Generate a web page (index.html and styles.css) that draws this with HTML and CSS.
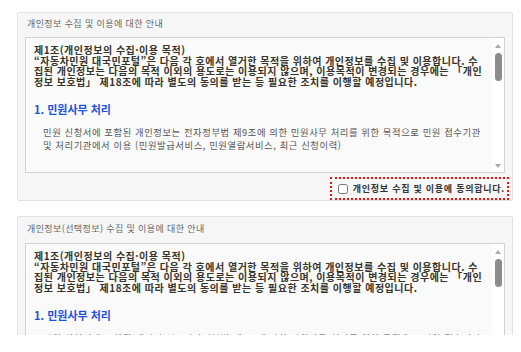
FILE: index.html
```html
<!DOCTYPE html>
<html lang="ko">
<head>
    <meta charset="UTF-8">
    <meta name="viewport" content="width=device-width, initial-scale=1.0">
    <title>개인정보 수집 및 이용 동의</title>
    <link rel="stylesheet" href="styles.css">
</head>
<body>
    <div class="page">
        <!-- 필수 정보 동의 -->
        <div class="panel">
            <div class="panel-title">개인정보 수집 및 이용에 대한 안내</div>
            <div class="terms-box">
                <div class="terms">
                    <p class="article">제1조(개인정보의 수집·이용 목적)<br>“자동차민원 대국민포털”은 다음 각 호에서 열거한 목적을 위하여 개인정보를 수집 및 이용합니다. 수집된 개인정보는 다음의 목적 이외의 용도로는 이용되지 않으며, 이용목적이 변경되는 경우에는 「개인정보 보호법」 제18조에 따라 별도의 동의를 받는 등 필요한 조치를 이행할 예정입니다.</p>
                    <h3 class="section-title">1. 민원사무 처리</h3>
                    <p class="section-text">민원 신청서에 포함된 개인정보는 전자정부법 제9조에 의한 민원사무 처리를 위한 목적으로 민원 접수기관 및 처리기관에서 이용 (민원발급서비스, 민원열람서비스, 최근 신청이력)</p>
                </div>
                <div class="scrollbar">
                    <span class="arrow up"></span>
                    <span class="thumb"></span>
                    <span class="arrow down"></span>
                </div>
            </div>
            <div class="agree-row">
                <label class="agree">
                    <input type="checkbox" class="agree-check">
                    개인정보 수집 및 이용에 동의합니다.
                </label>
            </div>
        </div>

        <!-- 선택 정보 동의 -->
        <div class="panel">
            <div class="panel-title second">개인정보(선택정보) 수집 및 이용에 대한 안내</div>
            <div class="terms-box">
                <div class="terms">
                    <p class="article">제1조(개인정보의 수집·이용 목적)<br>“자동차민원 대국민포털”은 다음 각 호에서 열거한 목적을 위하여 개인정보를 수집 및 이용합니다. 수집된 개인정보는 다음의 목적 이외의 용도로는 이용되지 않으며, 이용목적이 변경되는 경우에는 「개인정보 보호법」 제18조에 따라 별도의 동의를 받는 등 필요한 조치를 이행할 예정입니다.</p>
                    <h3 class="section-title">1. 민원사무 처리</h3>
                    <p class="section-text">민원 신청서에 포함된 개인정보는 전자정부법 제9조에 의한 민원사무 처리를 위한 목적으로 민원 접수기관 및 처리기관에서 이용 (민원발급서비스, 민원열람서비스, 최근 신청이력)</p>
                </div>
                <div class="scrollbar">
                    <span class="arrow up"></span>
                    <span class="thumb"></span>
                    <span class="arrow down"></span>
                </div>
            </div>
        </div>
    </div>
</body>
</html>
```

FILE: styles.css
```css
* {
    margin: 0;
    padding: 0;
    box-sizing: border-box;
    font-family: 'Noto Sans CJK KR', 'Noto Sans', sans-serif;
}

body {
    background: #fff;
}

.page {
    height: 335px;
    overflow: hidden;
    padding: 12px 8px 0 17px;
}

.panel {
    background: #f6f6f6;
    border: 1px solid #e2e2e2;
    border-radius: 2px;
    padding: 4px 7px 0 7px;
    margin-bottom: 15px;
}

.panel-title {
    font-size: 9px;
    line-height: 14px;
    letter-spacing: 0.4px;
    color: #666;
    padding-left: 2px;
    margin-bottom: 6px;
}

.panel-title.second {
    margin-top: 1px;
    margin-bottom: 7px;
}

.terms-box {
    display: flex;
    height: 136px;
    background: #fafafa;
    border: 1px solid #d2d2d2;
}

.terms {
    flex: 1;
    min-width: 0;
    overflow: hidden;
    padding: 7px 8px 0 8px;
    word-break: break-all;
}

.article {
    font-size: 10px;
    line-height: 10.5px;
    font-weight: bold;
    letter-spacing: 0.5px;
    color: #36342a;
}

.section-title {
    margin-top: 15px;
    font-size: 11px;
    line-height: 14px;
    font-weight: bold;
    color: #1f50d8;
}

.section-text {
    margin-top: 10px;
    padding-left: 9px;
    font-size: 9.3px;
    line-height: 13px;
    letter-spacing: 0.6px;
    color: #555;
}

.scrollbar {
    width: 12px;
    display: flex;
    flex-direction: column;
    align-items: center;
    padding: 6px 0 4px;
    background: #fff;
}

.arrow {
    width: 0;
    height: 0;
    border-left: 3.5px solid transparent;
    border-right: 3.5px solid transparent;
}

.arrow.up {
    border-bottom: 4px solid #a8a8a8;
}

.arrow.down {
    margin-top: auto;
    border-top: 4px solid #a8a8a8;
}

.thumb {
    width: 7px;
    height: 28px;
    margin-top: 5px;
    border-radius: 4px;
    background: #8c8c8c;
}

.agree-row {
    display: flex;
    justify-content: flex-end;
    margin: 4px -4px 0 0;
}

.agree {
    display: flex;
    align-items: center;
    gap: 5px;
    height: 23px;
    padding: 0 2px 0 6px;
    border: 2px dotted #ee1111;
    font-size: 9px;
    font-weight: bold;
    letter-spacing: 0.75px;
    color: #333;
}

.agree-check {
    width: 10px;
    height: 10px;
    margin: 0;
}
```
